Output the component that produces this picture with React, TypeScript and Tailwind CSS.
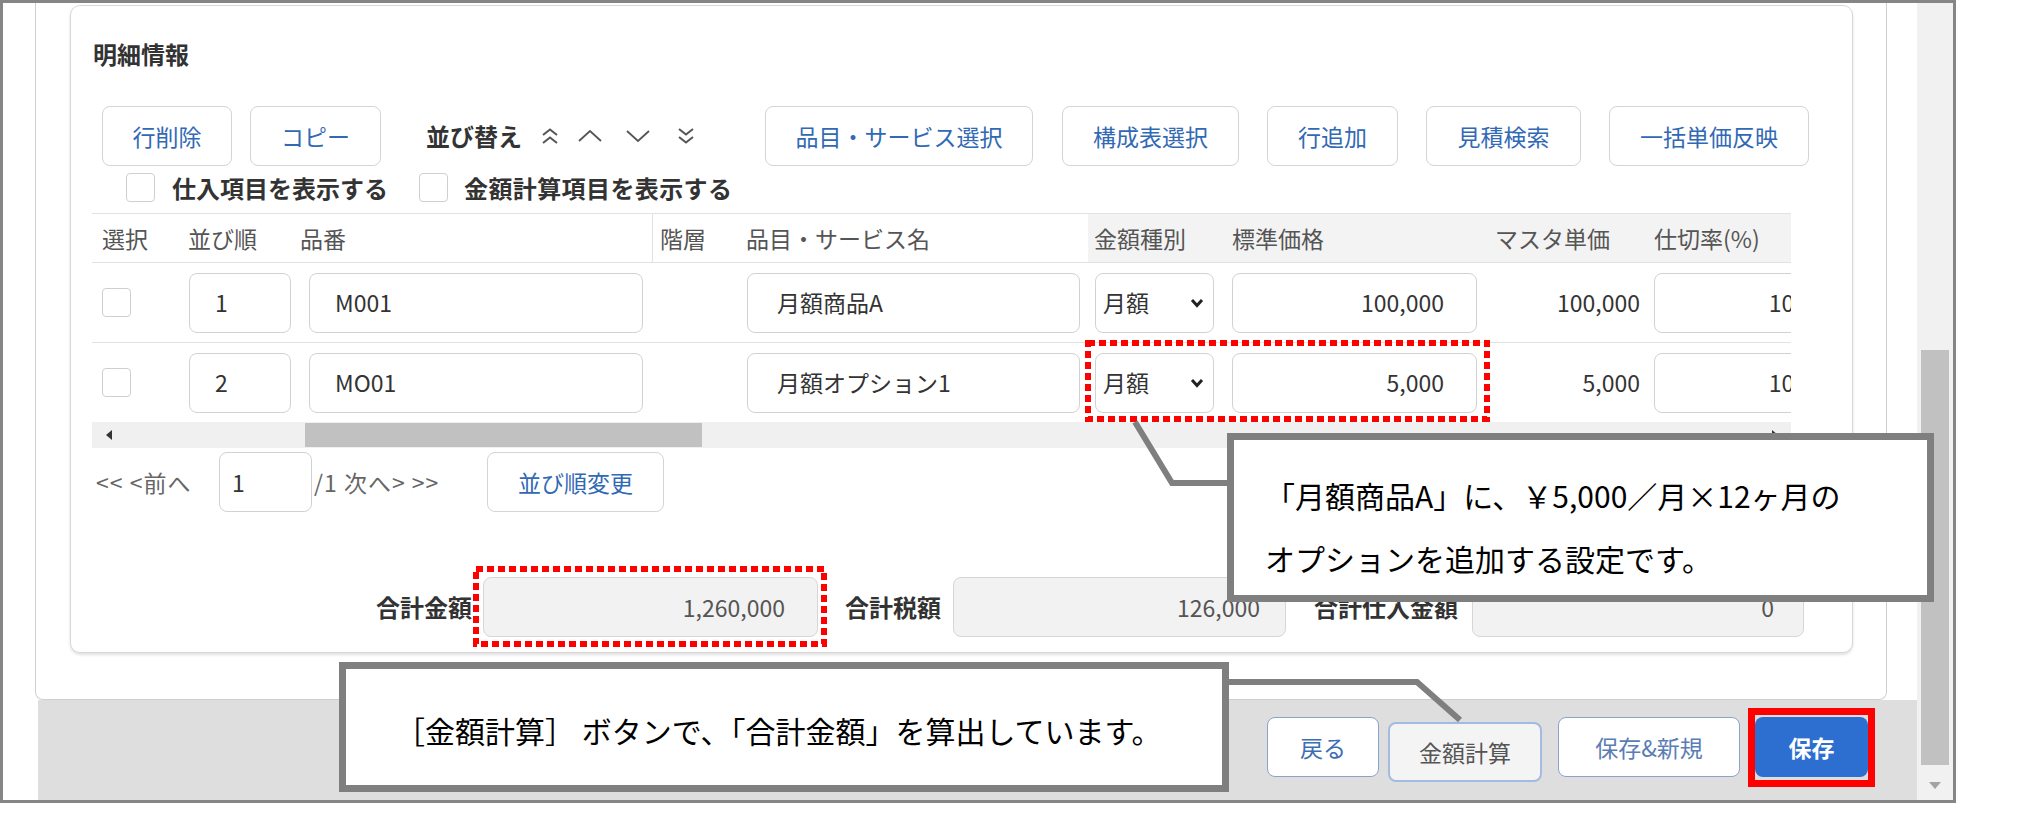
import React from "react";

const ToolBtn = ({ label, w, cls = "" }: { label: string; w: string; cls?: string }) => (
  <button
    className={`${w} ${cls} h-[60px] shrink-0 rounded-[8px] border border-[#d4d4d4] bg-white text-[23px] leading-none text-[#3169b4]`}
  >
    {label}
  </button>
);

const Check = () => (
  <div className="h-[29px] w-[29px] shrink-0 rounded-[4px] border border-[#cfcfcf] bg-white" />
);

const Chevron = ({ down = false }: { down?: boolean }) => (
  <svg width="26" height="14" viewBox="0 0 26 14">
    <path
      d={down ? "M2 2 L13 12 L24 2" : "M2 12 L13 2 L24 12"}
      fill="none"
      stroke="#555"
      strokeWidth="1.8"
    />
  </svg>
);

const DoubleChevron = ({ down = false }: { down?: boolean }) => (
  <svg width="20" height="20" viewBox="0 0 20 20">
    <path
      d={
        down
          ? "M3 3 L10 8.5 L17 3 M3 11 L10 16.5 L17 11"
          : "M3 9 L10 3.5 L17 9 M3 17 L10 11.5 L17 17"
      }
      fill="none"
      stroke="#555"
      strokeWidth="2"
    />
  </svg>
);

const Input = ({
  w,
  value,
  right = false,
  pad = "pl-[25px]",
}: {
  w: string;
  value: string;
  right?: boolean;
  pad?: string;
}) => (
  <div
    className={`${w} ${pad} flex h-[60px] shrink-0 items-center rounded-[8px] border border-[#d2d2d2] bg-white text-[23px] leading-none text-[#333] ${
      right ? "justify-end" : ""
    }`}
  >
    {value}
  </div>
);

const SelectBox = () => (
  <div className="flex h-[60px] w-[119px] shrink-0 items-center justify-between rounded-[8px] border border-[#d2d2d2] bg-white pl-[7px] pr-[9px] text-[23px] leading-none text-[#333]">
    <span>月額</span>
    <svg width="14" height="10" viewBox="0 0 14 10">
      <path d="M2 2 L7 7.5 L12 2" fill="none" stroke="#222" strokeWidth="3" />
    </svg>
  </div>
);

const rows = [
  { no: "1", code: "M001", name: "月額商品A", price: "100,000" },
  { no: "2", code: "MO01", name: "月額オプション1", price: "5,000" },
];

const TotalField = ({ w, value, pr }: { w: string; value: string; pr: string }) => (
  <div
    className={`${w} ${pr} flex h-[60px] shrink-0 items-center justify-end rounded-[8px] border border-[#d6d6d6] bg-[#f2f2f2] text-[23px] font-normal leading-none text-[#555]`}
  >
    {value}
  </div>
);

const Card = () => (
  <div className="h-[648px] w-[1783px] rounded-[10px] border border-[#d8d8d8] bg-white shadow-[0_2px_3px_rgba(0,0,0,0.12)]">
    <div className="pl-[22px] pt-[36px] text-[24px] font-semibold leading-[24px] text-[#333]">明細情報</div>

    {/* toolbar */}
    <div className="mt-[40px] flex h-[60px] items-center pl-[31px]">
      <ToolBtn label="行削除" w="w-[130px]" />
      <ToolBtn label="コピー" w="w-[131px]" cls="ml-[18px]" />
      <span className="ml-[45px] w-[110px] text-[24px] font-semibold leading-none text-[#333]">並び替え</span>
      <div className="flex w-[28px] justify-center">
        <DoubleChevron />
      </div>
      <div className="ml-[13px] flex w-[26px] justify-center">
        <Chevron />
      </div>
      <div className="ml-[22px] flex w-[26px] justify-center">
        <Chevron down />
      </div>
      <div className="ml-[22px] flex w-[25px] justify-center">
        <DoubleChevron down />
      </div>
      <ToolBtn label="品目・サービス選択" w="w-[268px]" cls="ml-[67px]" />
      <ToolBtn label="構成表選択" w="w-[177px]" cls="ml-[29px]" />
      <ToolBtn label="行追加" w="w-[131px]" cls="ml-[28px]" />
      <ToolBtn label="見積検索" w="w-[155px]" cls="ml-[28px]" />
      <ToolBtn label="一括単価反映" w="w-[200px]" cls="ml-[28px]" />
    </div>

    {/* checkboxes */}
    <div className="mt-[7px] flex h-[29px] items-center pl-[55px] text-[24px] font-semibold leading-none text-[#333]">
      <Check />
      <span className="ml-[17px] w-[247px]">仕入項目を表示する</span>
      <Check />
      <span className="ml-[16px] tracking-[0.4px]">金額計算項目を表示する</span>
    </div>

    {/* table */}
    <div className="ml-[21px] mt-[11px] w-[1699px] overflow-hidden">
      <div className="flex h-[50px] w-[1760px] border-y border-[#e2e2e2] text-[23px] leading-none text-[#555]">
        <div className="flex w-[88px] shrink-0 items-center pl-[10px]">選択</div>
        <div className="flex w-[120px] shrink-0 items-center pl-[8px]">並び順</div>
        <div className="flex w-[352px] shrink-0 items-center">品番</div>
        <div className="flex w-[88px] shrink-0 items-center border-l border-[#e2e2e2] pl-[7px]">階層</div>
        <div className="flex w-[348px] shrink-0 items-center pl-[6px]">品目・サービス名</div>
        <div className="flex w-[137px] shrink-0 items-center bg-[#f3f3f3] pl-[6px]">金額種別</div>
        <div className="flex w-[262px] shrink-0 items-center bg-[#f3f3f3] pl-[7px]">標準価格</div>
        <div className="flex w-[160px] shrink-0 items-center bg-[#f3f3f3] pl-[8px]">マスタ単価</div>
        <div className="flex w-[205px] shrink-0 items-center bg-[#f3f3f3] pl-[7px]">仕切率(%)</div>
      </div>
      {rows.map((r, i) => (
        <div
          key={r.no}
          className={`flex w-[1760px] ${i === 0 ? "h-[80px] border-b border-[#e2e2e2]" : "h-[79px]"}`}
        >
          <div className="flex w-[88px] shrink-0 items-center pl-[10px]">
            <Check />
          </div>
          <div className="flex w-[120px] shrink-0 items-center pl-[9px]">
            <Input w="w-[102px]" value={r.no} />
          </div>
          <div className="flex w-[352px] shrink-0 items-center pl-[9px]">
            <Input w="w-[334px]" value={r.code} />
          </div>
          <div className="w-[88px] shrink-0" />
          <div className="flex w-[348px] shrink-0 items-center pl-[7px]">
            <Input w="w-[333px]" value={r.name} pad="pl-[29px]" />
          </div>
          <div className="flex w-[137px] shrink-0 items-center pl-[7px]">
            <SelectBox />
          </div>
          <div className="flex w-[262px] shrink-0 items-center pl-[7px]">
            <Input w="w-[245px]" value={r.price} right pad="pr-[32px]" />
          </div>
          <div className="flex w-[160px] shrink-0 items-center justify-end pr-[7px] text-[23px] leading-none text-[#333]">
            {r.price}
          </div>
          <div className="flex w-[205px] shrink-0 items-center pl-[7px]">
            <Input w="w-[200px]" value="100" right pad="pr-[46px]" />
          </div>
        </div>
      ))}
      {/* horizontal scrollbar */}
      <div className="flex h-[26px] w-[1699px] items-center bg-[#f0f0f0]">
        <svg className="ml-[14px]" width="6" height="10" viewBox="0 0 6 10">
          <path d="M6 0 L0 5 L6 10 Z" fill="#333" />
        </svg>
        <div className="ml-[193px] h-[24px] w-[397px] bg-[#c1c1c1]" />
        <svg className="ml-[1070px]" width="6" height="10" viewBox="0 0 6 10">
          <path d="M0 0 L6 5 L0 10 Z" fill="#333" />
        </svg>
      </div>
    </div>

    {/* pagination */}
    <div className="mt-[4px] flex h-[60px] items-center pl-[25px] text-[23px] leading-none text-[#666]">
      <span className="w-[123px] tracking-[1px]">&lt;&lt; &lt;前へ</span>
      <Input w="w-[93px]" value="1" pad="pl-[12px]" />
      <span className="ml-[2px] w-[173px] tracking-[1px]">/1 次へ&gt; &gt;&gt;</span>
      <ToolBtn label="並び順変更" w="w-[177px]" />
    </div>

    {/* totals */}
    <div className="mt-[65px] flex h-[60px] items-center pl-[289px] text-[24px] font-semibold leading-none text-[#333]">
      <span className="w-[112px] text-right">合計金額</span>
      <div className="ml-[11px]">
        <TotalField w="w-[335px]" value="1,260,000" pr="pr-[32px]" />
      </div>
      <span className="w-[123px] text-right">合計税額</span>
      <div className="ml-[12px]">
        <TotalField w="w-[333px]" value="126,000" pr="pr-[25px]" />
      </div>
      <span className="w-[172px] text-right">合計仕入金額</span>
      <div className="ml-[14px]">
        <TotalField w="w-[332px]" value="0" pr="pr-[29px]" />
      </div>
    </div>
  </div>
);

export default function App() {
  return (
    <div className="relative h-[813px] w-[2027px] overflow-hidden bg-white font-['Noto_Sans_CJK_JP','Noto_Sans',sans-serif] text-[#333]">
      <div className="flex h-[803px] w-[1956px] border-[3px] border-[#858585]">
        <div className="flex w-[1914px] flex-col">
          <div className="flex h-[697px]">
            <div className="w-[32px] shrink-0" />
            <div className="w-[1852px] shrink-0 rounded-b-[8px] border-x border-b border-[#cfcfcf] pl-[34px] pt-[2px]">
              <Card />
            </div>
            <div className="w-[30px] shrink-0" />
          </div>
          <div className="flex h-[100px]">
            <div className="w-[35px] shrink-0" />
            <div className="flex flex-1 items-start justify-end bg-[#dedede] pr-[49px] pt-[17px] text-[23px] leading-none">
              <button className="h-[60px] w-[112px] rounded-[8px] border-[1.5px] border-[#8aa3c9] bg-white text-[#3d6db5]">
                戻る
              </button>
              <button className="ml-[9px] mt-[5px] h-[60px] w-[154px] rounded-[8px] border-2 border-[#a3bbe0] bg-[#f4f4f4] text-[#555]">
                金額計算
              </button>
              <button className="ml-[16px] h-[60px] w-[182px] rounded-[8px] border-[1.5px] border-[#8aa3c9] bg-white text-[#5a7db5]">
                保存&amp;新規
              </button>
              <button className="ml-[15px] h-[60px] w-[113px] rounded-[8px] bg-[#2d6fd1] font-semibold text-white">
                保存
              </button>
            </div>
          </div>
        </div>
        {/* vertical scrollbar */}
        <div className="flex w-[36px] flex-col items-center bg-[#f1f1f1]">
          <div className="mt-[347px] h-[415px] w-[28px] bg-[#c1c1c1]" />
          <svg className="mt-[17px]" width="12" height="7" viewBox="0 0 12 7">
            <path d="M0 0 L12 0 L6 7 Z" fill="#a3a3a3" />
          </svg>
        </div>
      </div>

      {/* annotations */}
      <svg className="pointer-events-none absolute left-0 top-0" width="2027" height="813">
        <rect x="1088" y="343" width="399" height="76" fill="none" stroke="#ff0000" strokeWidth="6" strokeDasharray="7 4" />
        <rect x="476" y="569" width="348" height="75" fill="none" stroke="#ff0000" strokeWidth="6" strokeDasharray="7 4" />
        <polyline points="1135,422 1172,483 1230,483" fill="none" stroke="#7f7f7f" strokeWidth="6" />
        <polyline points="1226,682 1417,682 1460,720" fill="none" stroke="#7f7f7f" strokeWidth="6" />
      </svg>

      <div className="absolute left-[1227px] top-[433px] h-[169px] w-[707px] whitespace-nowrap border-[7px] border-[#7f7f7f] bg-white pl-[31px] pt-[24px] text-[30px] leading-[63px] text-black">
        <div>「月額商品A」に、￥5,000／月×12ヶ月の</div>
        <div>オプションを追加する設定です。</div>
      </div>

      <div className="absolute left-[339px] top-[662px] h-[130px] w-[890px] whitespace-nowrap border-[7px] border-[#7f7f7f] bg-white pl-[49px] pt-[41px] text-[30px] leading-[40px] text-black">
        ［金額計算］ ボタンで、「合計金額」を算出しています。
      </div>

      <div className="absolute left-[1748px] top-[708px] h-[79px] w-[127px] border-[7px] border-[#ff0000]" />
    </div>
  );
}
